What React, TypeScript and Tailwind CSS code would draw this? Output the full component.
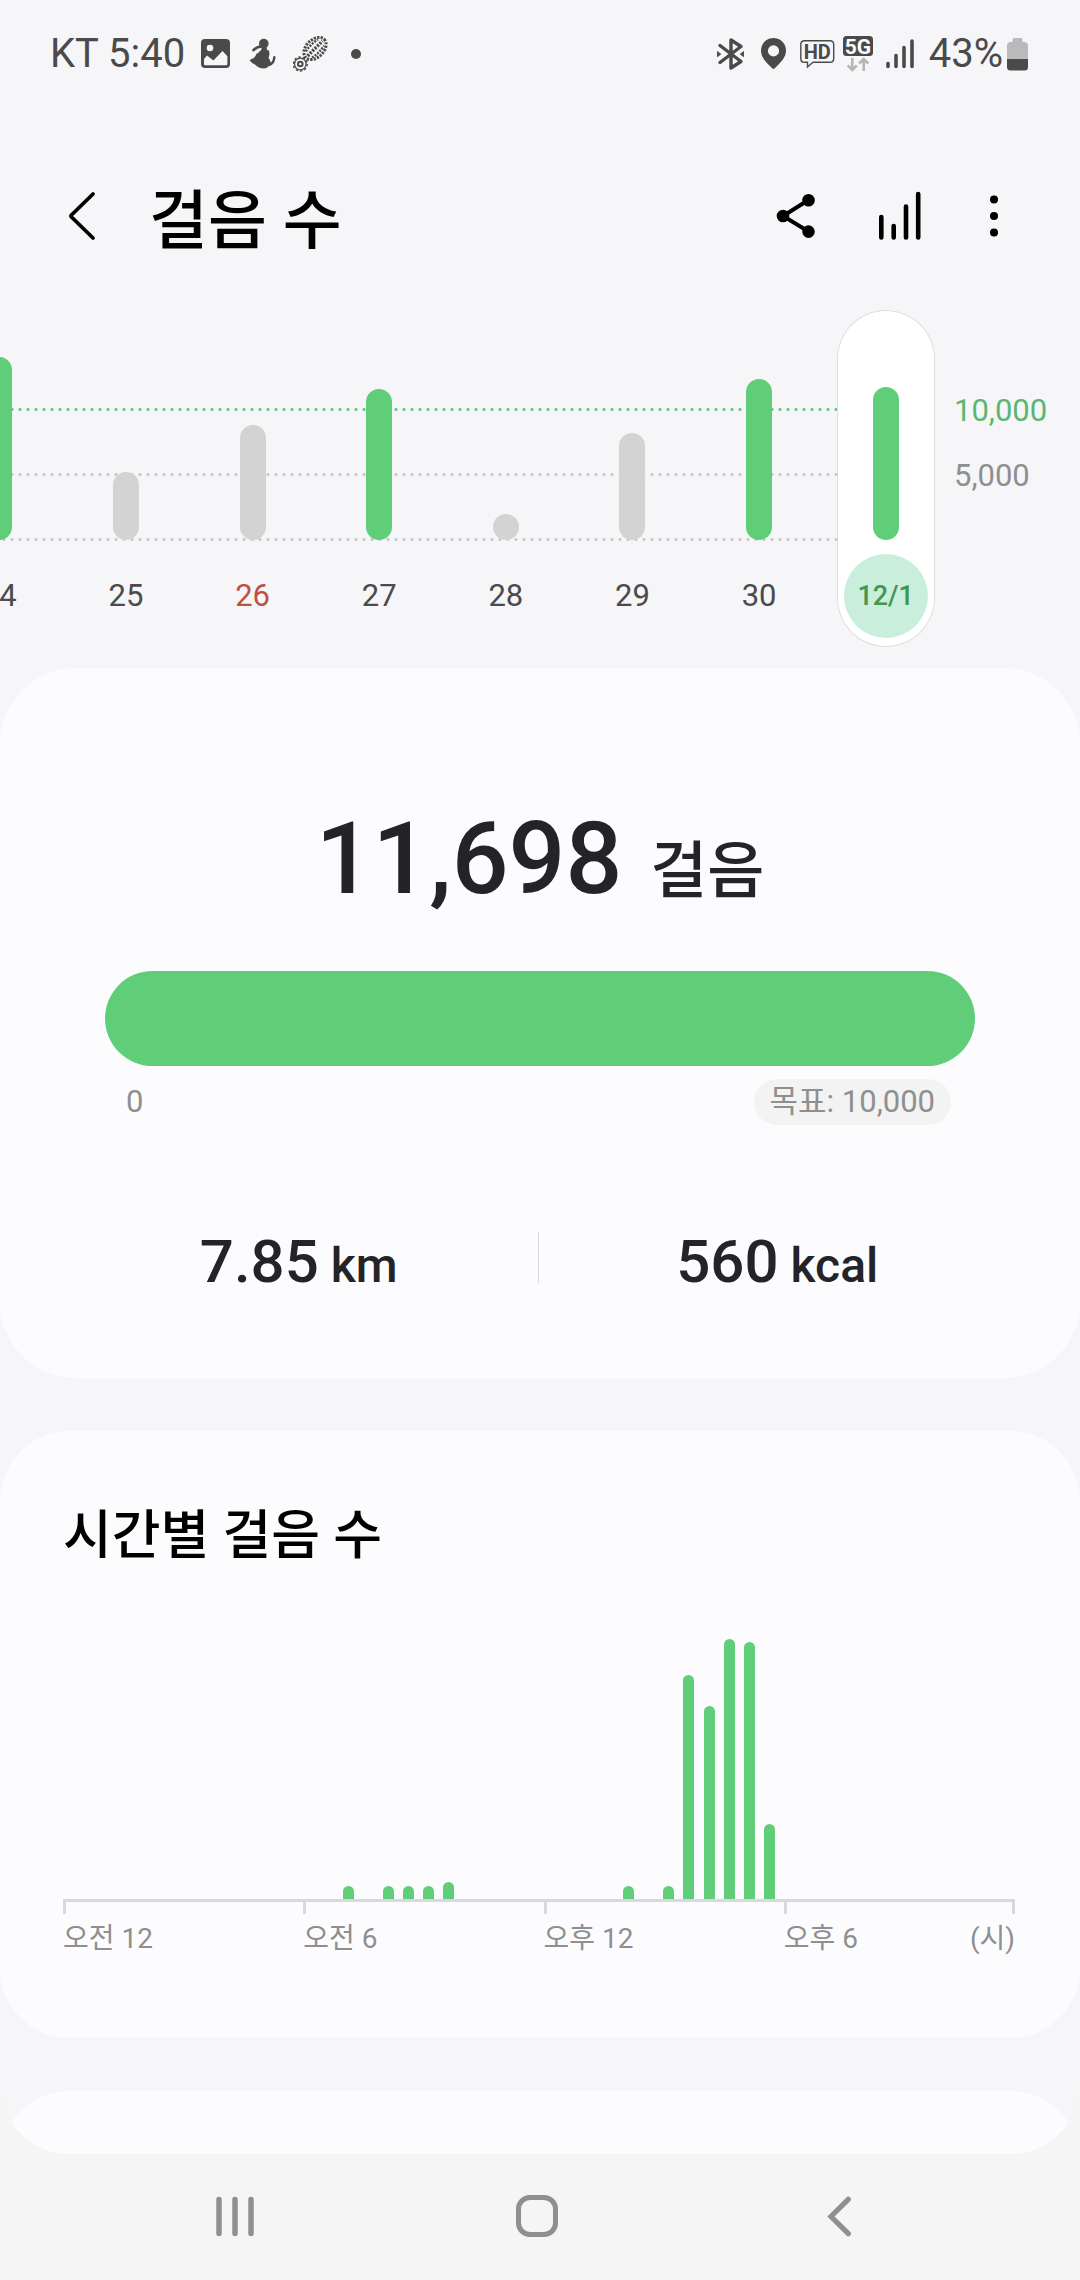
import React from "react";

type Day = { label: string; height: number; reached: boolean; holiday?: boolean; selected?: boolean };

const days: Day[] = [
  { label: "24", height: 183, reached: true },
  { label: "25", height: 68, reached: false },
  { label: "26", height: 115, reached: false, holiday: true },
  { label: "27", height: 151, reached: true },
  { label: "28", height: 26, reached: false },
  { label: "29", height: 107, reached: false },
  { label: "30", height: 161, reached: true },
  { label: "12/1", height: 153, reached: true, selected: true },
];

// Bar heights keyed by half-hour slot of the day.
const slots: Record<number, number> = {
  14: 13, 16: 13, 17: 13, 18: 13, 19: 17,
  28: 13, 30: 13, 31: 224, 32: 193, 33: 260, 34: 257, 35: 75,
};

function StatusBar() {
  return (
    <div className="flex h-27 items-center justify-between pl-[50px] pr-[52px] text-[40px] leading-[48px] text-[#4a4a4a]">
      <div className="flex items-center gap-4">
        <span>KT 5:40</span>
        <svg width="30" height="30" viewBox="0 0 30 30" fill="none" aria-hidden="true">
          <rect x="0" y="0" width="29" height="29" rx="4" fill="#4a4a4a" />
          <circle cx="9" cy="9" r="3.3" fill="#f6f6f8" />
          <path d="M3 20l3-3.6 6.4 5L21.5 12l4.9 5.2V25q0 1.3-1.3 1.3H4.3Q3 26.300 3 25z" fill="#f6f6f8" />
        </svg>
        <svg width="30" height="34" viewBox="0 0 30 34" fill="#4a4a4a" aria-hidden="true">
          <circle cx="16.800" cy="6.600" r="4.800" />
          <path d="M14.500 10h5l.8 4h-6z" />
          <path d="M6.500 13.200Q9.500 9.800 14 9.400" fill="none" stroke="#4a4a4a" strokeWidth="2.600" strokeLinecap="round" />
          <path d="M13.500 13.500Q18 11.500 22 13.800Q23 18 21.500 21Q23.500 23 24 26.500L20 30.800Q16.500 32 12.500 30.800Q9.500 29.500 8.300 27.800Q5 26.500 2.700 23.600Q3.500 22 6 21.500Q8.800 19.500 9.500 16.800Q11.500 16 13.500 13.500z" />
          <path d="M22 28Q26.800 26.500 27.300 20.300" fill="none" stroke="#4a4a4a" strokeWidth="2.400" strokeLinecap="round" />
        </svg>
        <svg width="36" height="36" viewBox="0 0 36 36" fill="none" aria-hidden="true">
          <g transform="rotate(-45 22 12.500)" stroke="#4a4a4a">
            <ellipse cx="22" cy="12.500" rx="13" ry="8.800" strokeWidth="3" strokeDasharray="2.200 1.200" />
            <path d="M11.500 12.500h21" strokeWidth="3.400" strokeDasharray="2.200 1.200" />
            <path d="M13.500 8.200q8-2 17 0M13.500 16.800q8 2 17 0" strokeWidth="2.400" strokeDasharray="2 1.200" />
          </g>
          <circle cx="7.300" cy="28" r="5.800" stroke="#4a4a4a" strokeWidth="1.300" />
          <circle cx="7.300" cy="28" r="7" stroke="#4a4a4a" strokeWidth="1.400" strokeDasharray="2.400 2" />
          <circle cx="7.300" cy="28" r="2.300" stroke="#4a4a4a" strokeWidth="2" />
        </svg>
        <svg width="22" height="12" viewBox="0 0 22 12" aria-hidden="true">
          <circle cx="11" cy="6" r="5" fill="#4a4a4a" />
        </svg>
      </div>

      <div className="flex items-center gap-2">
        <svg width="36" height="34" viewBox="0 0 36 34" fill="none" stroke="#4a4a4a" strokeWidth="3.400" strokeLinejoin="round" strokeLinecap="round" aria-hidden="true">
          <path d="M8 8.500L29 24.500L19 31V3L29 9.500L8 25.500" />
          <path d="M5.500 15v4.600l3-2.300zM31.500 15v4.600l-3-2.300z" fill="#4a4a4a" strokeWidth="1" />
        </svg>
        <svg width="35" height="32" viewBox="0 0 35 32" aria-hidden="true">
          <path fillRule="evenodd" d="M17.500 0C24.500 0 30 5.500 30 12.500C30 20 24 25 18.500 30.500Q17.500 31.400 16.500 30.500C11 25 5 20 5 12.500C5 5.500 10.500 0 17.500 0zM17.500 7.300a5.600 5.600 0 1 0 0 11.200a5.600 5.600 0 1 0 0-11.200z" fill="#4a4a4a" />
        </svg>
        <svg width="36" height="30" viewBox="0 0 36 30" aria-hidden="true">
          <path d="M5.500 1.700H31Q34.700 1.700 34.700 5.500V19.500Q34.700 23.300 31 23.300H14L8.500 28V23.300H5.500Q1.800 23.300 1.800 19.500V5.500Q1.800 1.700 5.500 1.700z" fill="none" stroke="#4a4a4a" strokeWidth="1.400" />
          <text x="18.200" y="19.600" textAnchor="middle" fontSize="20" fontWeight="700" fill="#4a4a4a">HD</text>
        </svg>
        <svg width="30" height="38" viewBox="0 0 30 38" fill="none" aria-hidden="true">
          <rect x="0" y="1" width="30" height="20" rx="3.500" fill="#4a4a4a" />
          <text x="15" y="18.500" textAnchor="middle" fontSize="21" fontWeight="700" fill="#fcfcfe">5G</text>
          <path d="M9.300 23v12M4.800 30.500l4.500 4.500l4.500-4.500M20.700 36V24M16.200 28.500l4.500-4.500l4.500 4.500" stroke="#b4b4b4" strokeWidth="2.500" />
        </svg>
        <svg width="40" height="30" viewBox="0 0 40 30" stroke="#4a4a4a" strokeWidth="3.600" strokeLinecap="round" aria-hidden="true">
          <path d="M7 24.500v3M15 16.500v11M23 8.500v19M31 2v25.500" />
        </svg>
        <div className="flex items-center gap-1">
          <span>43%</span>
          <svg width="21" height="33" viewBox="0 0 21 33" aria-hidden="true">
            <path d="M7 0h7q1.500 0 1.500 1.500V4H17q4 0 4 4v14H0V8q0-4 4-4h1.500V1.500Q5.500 0 7 0z" fill="#bababc" />
            <path d="M0 21h21v8q0 3.500-3.500 3.500h-14Q0 32.500 0 29z" fill="#4a4a4a" />
          </svg>
        </div>
      </div>
    </div>
  );
}

function Header() {
  return (
    <header className="mt-8 flex h-38 items-center justify-between pl-[57px] pr-[64px]">
      <div className="flex items-center gap-10">
        <button type="button" aria-label="뒤로" className="flex h-16 w-13 items-center justify-center">
          <svg width="52" height="50" viewBox="0 0 52 50" fill="none" stroke="#000" strokeWidth="3.800" strokeLinecap="round" strokeLinejoin="round">
            <path d="M36 3L14.500 24Q13.300 25 14.500 26L36 47" />
          </svg>
        </button>
        <h1 className="pt-3 text-[64px] font-medium leading-[72px] text-black">걸음 수</h1>
      </div>
      <div className="flex items-center gap-10">
        <button type="button" aria-label="공유" className="flex h-16 w-16 items-center justify-center">
          <svg width="40" height="46" viewBox="0 0 40 46" stroke="#000" strokeWidth="4">
            <path d="M32.500 7L7 23L32.500 38.500" fill="none" />
            <circle cx="32.500" cy="7.200" r="4.300" />
            <circle cx="7" cy="23" r="4.300" />
            <circle cx="32.500" cy="38.600" r="4.300" />
          </svg>
        </button>
        <button type="button" aria-label="통계" className="flex h-16 w-16 items-center justify-center">
          <svg width="44" height="50" viewBox="0 0 44 50" stroke="#000" strokeWidth="4.600" strokeLinecap="round">
            <path d="M3.300 26v20.500M15.700 35v11.500M28 15.500v31M40.200 3v43.500" />
          </svg>
        </button>
        <button type="button" aria-label="더보기" className="flex h-16 w-11 items-center justify-center">
          <svg width="10" height="44" viewBox="0 0 10 44">
            <circle cx="5" cy="5.500" r="4" />
            <circle cx="5" cy="22" r="4" />
            <circle cx="5" cy="38.500" r="4" />
          </svg>
        </button>
      </div>
    </header>
  );
}

function DayColumn({ day }: { day: Day }) {
  const bar = day.reached ? "bg-[#60ce79]" : "bg-[#d3d3d3]";
  const tone = day.selected
    ? "rounded-full bg-[#c9eedc] text-[27px] font-medium text-[#43964f]"
    : day.holiday
      ? "text-[31px] text-[#c05046]"
      : "text-[31px] text-[#4b4b4d]";
  const shell = day.selected ? "rounded-full bg-white ring-1 ring-inset ring-[#dedee0]" : "";
  return (
    <div className="flex justify-center">
      <button type="button" aria-pressed={!!day.selected} className={`flex w-[98px] flex-col items-center pb-[9px] ${shell}`}>
        <span className="flex h-[230px] items-end">
          <span className={`w-[26px] rounded-full ${bar}`} style={{ height: day.height }} />
        </span>
        <span className={`mt-[14px] flex h-21 w-21 items-center justify-center ${tone}`}>{day.label}</span>
      </button>
    </div>
  );
}

function WeekChart() {
  return (
    <section aria-label="일별 걸음 수" className="mt-[18px] flex overflow-hidden">
      <div className="relative -ml-16 grid flex-1 grid-cols-8">
        <div aria-hidden="true" className="absolute left-0 right-16 top-[98px] flex flex-col gap-[62px]">
          <div className="h-[3px] bg-[radial-gradient(circle,#5fc47a_1px,transparent_2px)] bg-[length:8px_3px]" />
          <div className="h-[3px] bg-[radial-gradient(circle,#c6c6c8_1px,transparent_2px)] bg-[length:8px_3px]" />
          <div className="h-[3px] bg-[radial-gradient(circle,#c6c6c8_1px,transparent_2px)] bg-[length:8px_3px]" />
        </div>
        <div className="relative col-span-8 grid grid-cols-subgrid">
          {days.map((d) => (
            <DayColumn key={d.label} day={d} />
          ))}
        </div>
      </div>
      <div className="w-[131px] pl-[5px] pt-[68px] text-[31px] leading-[65px]">
        <div className="text-[#5ab673]">10,000</div>
        <div className="text-[#8f8f91]">5,000</div>
      </div>
    </section>
  );
}

function Stat({ value, unit }: { value: string; unit: string }) {
  return (
    <div className="flex flex-1 items-baseline justify-center gap-3 font-medium text-[#242426]">
      <span className="text-[60px] leading-[60px]">{value}</span>
      <span className="text-[48px] leading-[48px]">{unit}</span>
    </div>
  );
}

function SummaryCard() {
  return (
    <section className="mt-[21px] rounded-[76px] bg-[#fcfcfe] pb-[86px] pt-[141px]">
      <div className="flex items-baseline justify-center gap-7 font-medium text-[#242426]">
        <span className="text-[100px] leading-[100px]">11,698</span>
        <span className="text-[62px] leading-[62px]">걸음</span>
      </div>
      <div className="mx-[105px] mt-[62px]">
        <div
          role="progressbar"
          aria-label="걸음 목표"
          aria-valuemin={0}
          aria-valuemax={10000}
          aria-valuenow={10000}
          className="h-[95px] rounded-full bg-[#60ce79]"
        />
        <div className="mt-[13px] flex items-center justify-between pl-[21px] pr-6 text-[31px] leading-[46px] text-[#8f8f8f]">
          <span>0</span>
          <button type="button" className="rounded-full bg-[#f3f3f3] px-4">목표: 10,000</button>
        </div>
      </div>
      <div className="mt-[107px] flex pl-[60px] pr-16">
        <Stat value="7.85" unit="km" />
        <div className="h-[51px] w-px bg-[#d8d8da]" />
        <Stat value="560" unit="kcal" />
      </div>
    </section>
  );
}

function HourlyCard() {
  return (
    <section className="mt-[53px] rounded-[70px] bg-[#fcfcfe] pb-[79px] pl-[63px] pr-[65px] pt-[73px]">
      <h2 className="text-[53px] font-medium leading-[64px] text-black">시간별 걸음 수</h2>
      <div className="mt-[71px] flex h-[260px] items-end justify-between">
        {Array.from({ length: 48 }, (_, i) => (
          <div key={i} className="w-[11px] rounded-t-full bg-[#60ce79]" style={{ height: slots[i] ?? 0 }} />
        ))}
      </div>
      <div className="grid grid-cols-[240fr_240fr_240fr_231fr] border-t-[3px] border-[#d9d9db] text-[28px] leading-10 text-[#8f8f8f]">
        {["오전 12", "오전 6", "오후 12"].map((t) => (
          <div key={t}>
            <div className="h-3 border-l-[3px] border-[#d9d9db]" />
            <div className="mt-[5px]">{t}</div>
          </div>
        ))}
        <div>
          <div className="h-3 border-x-[3px] border-[#d9d9db]" />
          <div className="mt-[5px] flex justify-between">
            <span>오후 6</span>
            <span>(시)</span>
          </div>
        </div>
      </div>
    </section>
  );
}

function NavBar() {
  return (
    <nav className="grid h-[126px] grid-cols-3 pl-[84px] pr-[90px]">
      <button type="button" aria-label="최근 앱" className="flex items-center justify-center">
        <svg width="40" height="42" viewBox="0 0 40 42" stroke="#8f8f8f" strokeWidth="5.500" strokeLinecap="round">
          <path d="M4 3.500v34M20 3.500v34M36 3.500v34" />
        </svg>
      </button>
      <button type="button" aria-label="홈" className="flex items-center justify-center">
        <svg width="44" height="44" viewBox="0 0 44 44" fill="none" stroke="#8f8f8f" strokeWidth="5">
          <rect x="3.500" y="2.500" width="37" height="37" rx="11.500" />
        </svg>
      </button>
      <button type="button" aria-label="뒤로 가기" className="flex items-center justify-center">
        <svg width="26" height="42" viewBox="0 0 26 42" fill="none" stroke="#8f8f8f" strokeWidth="5.200" strokeLinecap="round">
          <path d="M22.300 3.300L5 20.500L22.300 37.700" />
        </svg>
      </button>
    </nav>
  );
}

export default function App() {
  return (
    <div className="flex min-h-screen flex-col bg-[#f5f5f5] font-['Roboto','Noto_Sans_CJK_KR',sans-serif]">
      <main className="flex-1 overflow-hidden rounded-b-[70px] bg-[#f6f6f8]">
        <StatusBar />
        <Header />
        <WeekChart />
        <SummaryCard />
        <HourlyCard />
        <section className="-mb-[81px] mt-[53px] h-36 rounded-t-[70px] bg-[#fcfcfe]" />
      </main>
      <NavBar />
    </div>
  );
}
